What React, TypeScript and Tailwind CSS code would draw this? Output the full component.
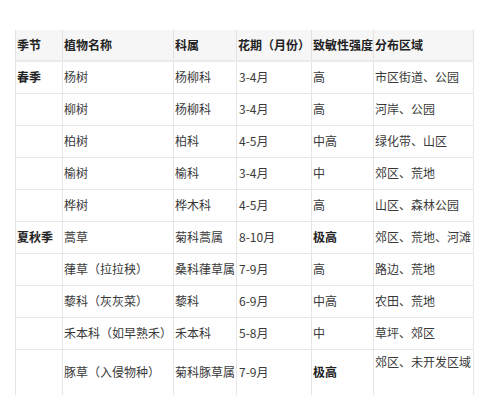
const rows = [
  { season: "春季", name: "杨树", family: "杨柳科", bloom: "3-4月", level: "高", area: "市区街道、公园" },
  { season: "", name: "柳树", family: "杨柳科", bloom: "3-4月", level: "高", area: "河岸、公园" },
  { season: "", name: "柏树", family: "柏科", bloom: "4-5月", level: "中高", area: "绿化带、山区" },
  { season: "", name: "榆树", family: "榆科", bloom: "3-4月", level: "中", area: "郊区、荒地" },
  { season: "", name: "桦树", family: "桦木科", bloom: "4-5月", level: "高", area: "山区、森林公园" },
  { season: "夏秋季", name: "蒿草", family: "菊科蒿属", bloom: "8-10月", level: "极高", area: "郊区、荒地、河滩" },
  { season: "", name: "葎草（拉拉秧）", family: "桑科葎草属", bloom: "7-9月", level: "高", area: "路边、荒地" },
  { season: "", name: "藜科（灰灰菜）", family: "藜科", bloom: "6-9月", level: "中高", area: "农田、荒地" },
  { season: "", name: "禾本科（如早熟禾）", family: "禾本科", bloom: "5-8月", level: "中", area: "草坪、郊区" },
];

const headers = ["季节", "植物名称", "科属", "花期（月份）", "致敏性强度", "分布区域"];

export default function App() {
  return (
    <div
      className="h-[417px] w-[500px] overflow-hidden bg-white pt-[30px] pl-[15px] text-[12px] text-[#3a3a3a]"
      style={{ fontFamily: '"Noto Sans CJK SC", "Noto Sans", sans-serif' }}
    >
      <table className="w-[458px] table-fixed border-collapse">
        <colgroup>
          <col className="w-[47px]" />
          <col className="w-[111px]" />
          <col className="w-[63px]" />
          <col className="w-[75px]" />
          <col className="w-[62px]" />
          <col className="w-[100px]" />
        </colgroup>
        <thead>
          <tr className="bg-[#f6f6f6]">
            {headers.map((h) => (
              <th
                key={h}
                className="h-[31px] whitespace-nowrap border-x border-b-2 border-x-[#e2e2e2] border-b-[#ebebeb] pl-px text-left font-bold text-[#222]"
              >
                {h}
              </th>
            ))}
          </tr>
        </thead>
        <tbody>
          {rows.map((r) => (
            <tr key={r.name}>
              <td className="h-[32px] whitespace-nowrap border border-t-0 border-[#e6e6e6] pl-px font-bold text-[#222]">{r.season}</td>
              <td className="whitespace-nowrap border border-t-0 border-[#e6e6e6] pl-px">{r.name}</td>
              <td className="whitespace-nowrap border border-t-0 border-[#e6e6e6] pl-px">{r.family}</td>
              <td className="whitespace-nowrap border border-t-0 border-[#e6e6e6] pl-[2px]">{r.bloom}</td>
              <td className={`whitespace-nowrap border border-t-0 border-[#e6e6e6] pl-px ${r.level === "极高" ? "font-bold text-[#222]" : ""}`}>
                {r.level}
              </td>
              <td className="whitespace-nowrap border border-t-0 border-[#e6e6e6] pl-px">{r.area}</td>
            </tr>
          ))}
          <tr>
            <td className="h-[46px] border-x border-[#e6e6e6]"></td>
            <td className="whitespace-nowrap border-x border-[#e6e6e6] pl-px">豚草（入侵物种）</td>
            <td className="whitespace-nowrap border-x border-[#e6e6e6] pl-px">菊科豚草属</td>
            <td className="whitespace-nowrap border-x border-[#e6e6e6] pl-[2px]">7-9月</td>
            <td className="whitespace-nowrap border-x border-[#e6e6e6] pl-px font-bold text-[#222]">极高</td>
            <td className="whitespace-nowrap border-x border-[#e6e6e6] pl-px leading-[20px]">
              郊区、未开发区域
              <br />
              &nbsp;
            </td>
          </tr>
        </tbody>
      </table>
    </div>
  );
}
